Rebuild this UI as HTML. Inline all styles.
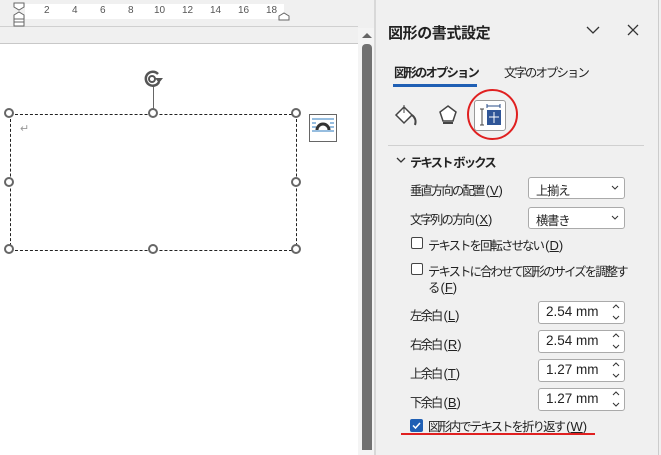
<!DOCTYPE html><html><head><meta charset="utf-8"><style>
*{margin:0;padding:0;box-sizing:border-box}
body{width:661px;height:455px;overflow:hidden;background:#f0f0f0;position:relative;font-family:"Liberation Sans","Noto Sans CJK JP",sans-serif;color:#222}
.a{position:absolute}
.t{font-size:12.3px;white-space:nowrap;letter-spacing:-1.8px}
.p{letter-spacing:0;font-size:13px;margin-left:2px}
.h{width:10px;height:10px;border:2px solid #666;border-radius:50%;background:#fff;position:absolute}
.sel{border:1px solid #aaa;border-radius:3px;background:#fff;height:22px;font-size:12.3px;padding:3px 7px;letter-spacing:-1.2px}
.num{font-size:13.5px;letter-spacing:0;padding:2px 7px}
.cb{width:12px;height:12px;border:1px solid #444;border-radius:2px;background:#fff;position:absolute}
u{text-decoration:underline}
.r{font-size:10px;color:#555;position:absolute;top:5px}
</style></head><body>
<!-- ruler -->
<div class="a" style="left:25px;top:4px;width:259px;height:15px;background:#fff"></div>
<div class="a" style="left:0;top:26px;width:358px;height:1px;background:#d0d0d0"></div>
<div class="a" style="left:0;top:43px;width:358px;height:1px;background:#c8c8c8"></div>
<div class="r" style="left:44px">2</div><div class="r" style="left:72px">4</div><div class="r" style="left:100px">6</div><div class="r" style="left:128px">8</div><div class="r" style="left:154px">10</div><div class="r" style="left:182px">12</div><div class="r" style="left:210px">14</div><div class="r" style="left:238px">16</div><div class="r" style="left:266px">18</div>
<svg class="a" style="left:12px;top:2px" width="16" height="26"><path d="M2 1H12V5L7 8L2 5Z M2 17V13L7 10L12 13V17Z M2 17H12V24H2Z M2 20H12" fill="#fff" stroke="#666"/></svg>
<svg class="a" style="left:278px;top:11px" width="14" height="10"><path d="M1 9V5L6 2L11 5V9Z" fill="#fff" stroke="#666"/></svg>
<!-- doc -->
<div class="a" style="left:0;top:44px;width:358px;height:411px;background:#fff"></div>
<div class="a" style="left:358px;top:28px;width:16px;height:427px;background:#f4f4f4"></div>
<svg class="a" style="left:361px;top:31px" width="12" height="8"><path d="M1 7L6 2L11 7Z" fill="#666"/></svg>
<div class="a" style="left:362px;top:44px;width:10px;height:406px;background:#717171;border-radius:4px 4px 0 0"></div>
<div class="a" style="left:374px;top:0;width:2px;height:455px;background:#d8d8d8"></div>
<!-- shape -->
<div class="a" style="left:10px;top:114px;width:287px;height:137px;border:1px dashed #222"></div>
<div class="a" style="left:20px;top:122px;color:#999;font-size:11px">↵</div>
<div class="a" style="left:153px;top:86px;width:1px;height:28px;background:#666"></div>
<svg class="a" style="left:142px;top:68px" width="26" height="22"><path d="M16 6A7 7 0 1 0 17 14" fill="none" stroke="#555" stroke-width="2.5"/><circle cx="10" cy="11" r="3" fill="none" stroke="#555" stroke-width="2"/><path d="M13 10L21 10L17 15Z" fill="#555"/></svg>
<div class="h" style="left:4px;top:108px"></div><div class="h" style="left:148px;top:108px"></div><div class="h" style="left:291px;top:108px"></div>
<div class="h" style="left:4px;top:177px"></div><div class="h" style="left:291px;top:177px"></div>
<div class="h" style="left:4px;top:244px"></div><div class="h" style="left:148px;top:244px"></div><div class="h" style="left:291px;top:244px"></div>
<svg class="a" style="left:309px;top:114px" width="28" height="28"><rect x=".5" y=".5" width="27" height="27" fill="#fff" stroke="#666"/><path d="M3 5H25M3 9H7M21 9H25M3 13H7M21 13H25M3 17H25" stroke="#2e7bbf"/><path d="M8 16A6 6 0 0 1 20 16" fill="none" stroke="#333" stroke-width="3"/></svg>
<!-- panel -->
<div class="a" style="left:388px;top:22px;font-size:15px;font-weight:bold;color:#222;letter-spacing:-0.4px;white-space:nowrap">図形の書式設定</div>
<svg class="a" style="left:586px;top:25px" width="14" height="10"><path d="M1 2L7 8L13 2" fill="none" stroke="#333" stroke-width="1.3"/></svg>
<svg class="a" style="left:627px;top:24px" width="12" height="12"><path d="M1 1L11 11M11 1L1 11" stroke="#333" stroke-width="1.3"/></svg>
<div class="a t" style="left:394px;top:63px;font-weight:bold">図形のオプション</div>
<div class="a" style="left:393px;top:84px;width:84px;height:3px;background:#1f5fb4"></div>
<div class="a t" style="left:504px;top:63px">文字のオプション</div>
<svg class="a" style="left:393px;top:103px" width="26" height="24"><path d="M3 12L11 4L19 12L11 20Z" fill="#fff" stroke="#444" stroke-width="1.5"/><path d="M11 2V10" stroke="#444"/><path d="M19 12Q24 16 22 22" fill="none" stroke="#444" stroke-width="2"/></svg>
<svg class="a" style="left:438px;top:104px" width="20" height="22"><path d="M10 2L18 8L15 17H5L2 8Z" fill="#fff" stroke="#444" stroke-width="1.5"/><path d="M5 19H15" stroke="#444" stroke-width="2"/></svg>
<div class="a" style="left:474px;top:100px;width:32px;height:31px;border:1px solid #999;border-radius:3px;background:#fff"></div>
<svg class="a" style="left:478px;top:103px" width="26" height="24"><path d="M2 6H6M4 6V22M2 22H6" stroke="#444"/><path d="M9 3H22M9 1V5M22 1V5" stroke="#2a4d8a"/><rect x="9" y="7" width="14" height="15" fill="#2f5597"/><path d="M16 9V20M11 14H21" stroke="#fff"/></svg>
<div class="a" style="left:467px;top:89px;width:51px;height:51px;border:2px solid #e02020;border-radius:50%"></div>
<div class="a" style="left:388px;top:145px;width:256px;height:1px;background:#d0d0d0"></div>
<svg class="a" style="left:396px;top:156px" width="10" height="8"><path d="M1 2L5 6L9 2" fill="none" stroke="#333" stroke-width="1.3"/></svg>
<div class="a t" style="left:410px;top:153px;font-weight:bold">テキスト ボックス</div>
<div class="a t" style="left:410px;top:181px">垂直方向の配置<span class="p">(<u>V</u>)</span></div>
<div class="a sel" style="left:528px;top:177px;width:97px">上揃え</div>
<div class="a t" style="left:410px;top:210px">文字列の方向<span class="p">(<u>X</u>)</span></div>
<div class="a sel" style="left:528px;top:207px;width:97px">横書き</div>
<svg class="a" style="left:611px;top:185px" width="8" height="6"><path d="M1 1L4 4L7 1" fill="none" stroke="#333"/></svg>
<svg class="a" style="left:611px;top:215px" width="8" height="6"><path d="M1 1L4 4L7 1" fill="none" stroke="#333"/></svg>
<div class="cb" style="left:411px;top:237px"></div>
<div class="a t" style="left:428px;top:236px">テキストを回転させない<span class="p">(<u>D</u>)</span></div>
<div class="cb" style="left:411px;top:263px"></div>
<div class="a t" style="left:428px;top:262px">テキストに合わせて図形のサイズを調整す</div>
<div class="a t" style="left:428px;top:278px">る<span class="p">(<u>F</u>)</span></div>
<div class="a t" style="left:410px;top:306px">左余白<span class="p">(<u>L</u>)</span></div>
<div class="a t" style="left:410px;top:335px">右余白<span class="p">(<u>R</u>)</span></div>
<div class="a t" style="left:410px;top:364px">上余白<span class="p">(<u>T</u>)</span></div>
<div class="a t" style="left:410px;top:393px">下余白<span class="p">(<u>B</u>)</span></div>
<div class="a sel num" style="left:538px;top:301px;width:87px;height:23px">2.54 mm</div>
<div class="a sel num" style="left:538px;top:330px;width:87px;height:23px">2.54 mm</div>
<div class="a sel num" style="left:538px;top:359px;width:87px;height:23px">1.27 mm</div>
<div class="a sel num" style="left:538px;top:388px;width:87px;height:23px">1.27 mm</div>
<svg class="a" style="left:612px;top:303px" width="8" height="18"><path d="M1 5L4 2L7 5M1 13L4 16L7 13" fill="none" stroke="#333"/></svg>
<svg class="a" style="left:612px;top:332px" width="8" height="18"><path d="M1 5L4 2L7 5M1 13L4 16L7 13" fill="none" stroke="#333"/></svg>
<svg class="a" style="left:612px;top:361px" width="8" height="18"><path d="M1 5L4 2L7 5M1 13L4 16L7 13" fill="none" stroke="#333"/></svg>
<svg class="a" style="left:612px;top:390px" width="8" height="18"><path d="M1 5L4 2L7 5M1 13L4 16L7 13" fill="none" stroke="#333"/></svg>
<svg class="a" style="left:410px;top:419px" width="13" height="13"><rect width="13" height="13" rx="2" fill="#1f5fb4"/><path d="M3 6.5L5.5 9L10 4" fill="none" stroke="#fff" stroke-width="1.5"/></svg>
<div class="a t" style="left:428px;top:417px">図形内でテキストを折り返す<span class="p">(<u>W</u>)</span></div>
<div class="a" style="left:401px;top:433px;width:194px;height:2px;background:#e02020"></div>
<div class="a" style="left:658px;top:0;width:1px;height:455px;background:#ccc"></div>
</body></html>
